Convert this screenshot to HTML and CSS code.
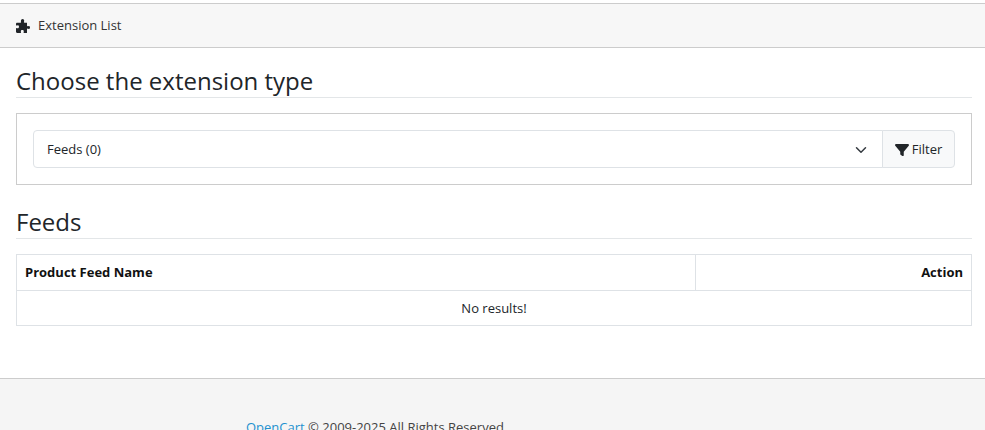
FILE: index.html
```html
<!DOCTYPE html>
<html lang="en">
<head>
<meta charset="utf-8">
<title>Extension List</title>
<link rel="stylesheet" href="styles.css">
</head>
<body>
<div class="crumb">
  <svg class="puzzle" viewBox="0 0 14 14"><path d="M5 1.800C5 .8 5.700 0 6.600 0s1.600.8 1.600 1.800c0 .6-.3 1-.3 1.400 0 .3.200.5.600.5H11v2.900c0 .4.200.6.500.6.400 0 .8-.3 1.300-.3.700 0 1.200.6 1.200 1.500s-.5 1.500-1.200 1.500c-.5 0-.9-.3-1.300-.3-.3 0-.5.200-.5.600V14H8.100c-.4 0-.6-.2-.6-.5 0-.4.300-.8.300-1.300 0-.7-.6-1.200-1.500-1.200s-1.500.5-1.500 1.200c0 .5.300.9.300 1.300 0 .3-.2.500-.6.500H1.200C.5 14 0 13.500 0 12.800V9.500c0-.4.200-.6.500-.6.400 0 .8.300 1.300.3.700 0 1.200-.6 1.200-1.500s-.5-1.500-1.200-1.500c-.5 0-.9.300-1.300.3-.3 0-.5-.2-.5-.6V4.900c0-.7.500-1.200 1.200-1.200h3.300c.4 0 .6-.2.600-.5 0-.4-.3-.8-.3-1.400z"/></svg>
  <span class="crumb-text">Extension List</span>
</div>
<main class="content">
  <h2 class="heading first">Choose the extension type</h2>
  <section class="filter-box">
    <div class="input-group">
      <div class="select">
        <span>Feeds (0)</span>
        <svg class="chevron" viewBox="0 0 16 16"><path d="M2 5l6 6 6-6" fill="none" stroke="#343a40" stroke-width="2" stroke-linecap="round" stroke-linejoin="round"/></svg>
      </div>
      <button class="filter-btn" type="button">
        <svg class="funnel" viewBox="0 0 512 512"><path d="M3.900 54.900C10.500 40.900 24.500 32 40 32h432c15.500 0 29.500 8.900 36.100 22.900 6.600 14 4.600 30.500-5.200 42.500L320 320.900V448c0 12.100-6.800 23.200-17.700 28.600s-23.800 4.300-33.500-3l-64-48c-8.100-6-12.800-15.500-12.800-25.600V320.900L9 97.300C-.7 85.400-2.800 68.800 3.900 54.900z"/></svg>
        Filter
      </button>
    </div>
  </section>
  <h2 class="heading">Feeds</h2>
  <table class="results">
    <thead>
      <tr><th class="col-name">Product Feed Name</th><th class="col-action">Action</th></tr>
    </thead>
    <tbody>
      <tr><td class="empty" colspan="2">No results!</td></tr>
    </tbody>
  </table>
</main>
<footer class="footer">
  <p class="copy"><a href="#">OpenCart</a> © 2009-2025 All Rights Reserved.</p>
</footer>
</body>
</html>
```
FILE: styles.css
```css
* { box-sizing: border-box; }
html, body { margin: 0; padding: 0; height: 430px; overflow: hidden; }
body {
  background: #fff;
  color: #212529;
  font-family: "Open Sans", sans-serif;
  font-size: 13px;
  line-height: 19px;
  padding-top: 3px;
}
.crumb {
  height: 45px;
  background: #f7f7f7;
  border-top: 1px solid #ccc;
  border-bottom: 1px solid #ccc;
  display: flex;
  align-items: center;
  padding-left: 16px;
  gap: 8px;
}
.puzzle { width: 14px; height: 14px; fill: #212529; flex: none; }
.crumb-text { font-size: 13px; color: #333; }
.content { padding: 0 13px 0 16px; }
.heading {
  margin: 0 0 15px;
  font-size: 24px;
  font-weight: 400;
  line-height: 29px;
  height: 32px;
  border-bottom: 1px solid #e3e6e8;
  color: #212529;
}
.heading.first { margin-top: 18px; }
.filter-box {
  height: 72px;
  border: 1px solid #ccc;
  padding: 16px;
  margin-bottom: 22px;
}
.input-group { display: flex; height: 38px; }
.select {
  flex: 1;
  display: flex;
  align-items: center;
  justify-content: space-between;
  padding: 1px 15px 0 13px;
  border: 1px solid #dee2e6;
  border-radius: 4px 0 0 4px;
  background: #fff;
}
.chevron { width: 12px; height: 12px; }
.filter-btn {
  width: 73px;
  margin-left: -1px;
  border: 1px solid #dee2e6;
  border-radius: 0 4px 4px 0;
  background: #f8f9fa;
  font: inherit;
  color: #212529;
  display: flex;
  align-items: center;
  justify-content: center;
  gap: 3px;
  padding: 1px 0 0;
}
.funnel { width: 14px; height: 14px; fill: #212529; }
.results { width: 100%; border-collapse: collapse; table-layout: fixed; }
.results th, .results td { border: 1px solid #dee2e6; padding: 8px; }
.results td { padding: 8px 8px 7px; }
.results th { font-weight: 700; color: #111; }
.col-name { text-align: left; width: 679px; }
.col-action { text-align: right; }
.empty { text-align: center; }
.footer {
  margin-top: 52px;
  height: 60px;
  background: #f5f5f5;
  border-top: 1px solid #ccc;
  padding: 39px 0 0 246px;
}
.copy { margin: 0; color: #444; }
.copy a { color: #1e91cf; text-decoration: none; }
```
